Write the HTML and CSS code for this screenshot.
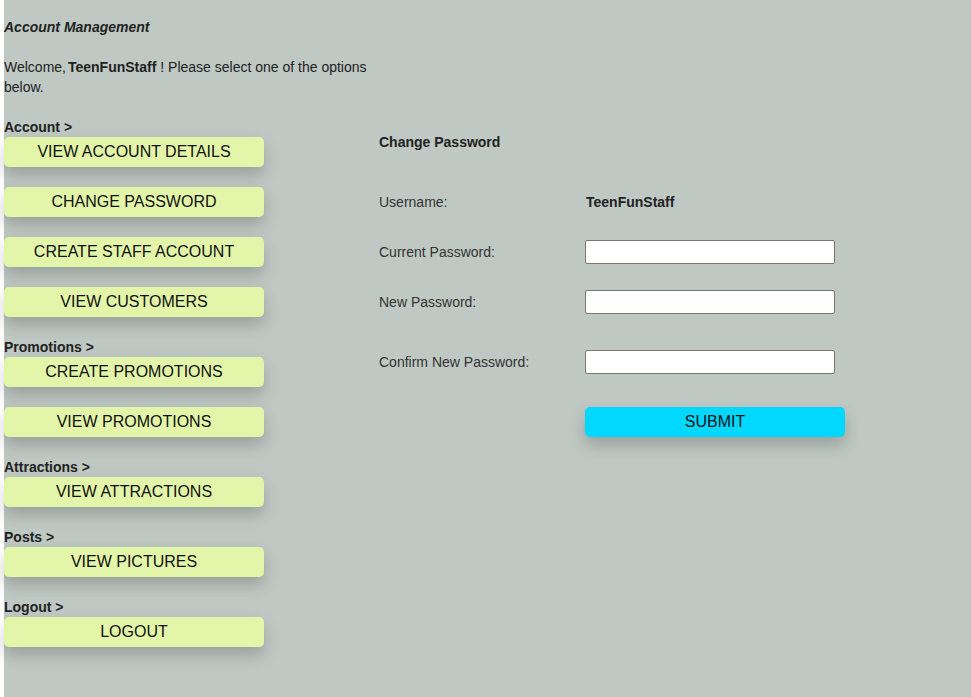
FILE: index.html
```html
<!DOCTYPE html>
<html lang="en">
<head>
<meta charset="utf-8">
<title>Account Management</title>
<link rel="stylesheet" href="styles.css">
</head>
<body>
<div class="page">
  <div class="menu">
    <p class="title">Account Management</p>
    <p class="welcome"><span>Welcome,</span><b class="name">TeenFunStaff</b><span> ! Please select one of the options below.</span></p>

    <div class="group-label">Account &gt;</div>
    <button class="nav-btn">VIEW ACCOUNT DETAILS</button>
    <button class="nav-btn">CHANGE PASSWORD</button>
    <button class="nav-btn">CREATE STAFF ACCOUNT</button>
    <button class="nav-btn">VIEW CUSTOMERS</button>

    <div class="group-label">Promotions &gt;</div>
    <button class="nav-btn">CREATE PROMOTIONS</button>
    <button class="nav-btn">VIEW PROMOTIONS</button>

    <div class="group-label">Attractions &gt;</div>
    <button class="nav-btn">VIEW ATTRACTIONS</button>

    <div class="group-label">Posts &gt;</div>
    <button class="nav-btn">VIEW PICTURES</button>

    <div class="group-label">Logout &gt;</div>
    <button class="nav-btn">LOGOUT</button>
  </div>

  <form class="panel">
    <div class="panel-title">Change Password</div>
    <div class="row row-user">
      <span class="label">Username:</span>
      <span class="value">TeenFunStaff</span>
    </div>
    <div class="row row-current">
      <label class="label">Current Password:</label>
      <input class="field" type="password">
    </div>
    <div class="row row-new">
      <label class="label">New Password:</label>
      <input class="field" type="password">
    </div>
    <div class="row row-confirm">
      <label class="label">Confirm New Password:</label>
      <input class="field" type="password">
    </div>
    <div class="row row-submit">
      <span class="label"></span>
      <button type="button" class="submit-btn">SUBMIT</button>
    </div>
  </form>
</div>
</body>
</html>
```

FILE: styles.css
```css
html, body {
  margin: 0;
  padding: 0;
  background: #ffffff;
}

body {
  font-family: "Liberation Sans", Arial, sans-serif;
  font-size: 14px;
  line-height: 20px;
  color: #222222;
}

.page {
  margin-left: 4px;
  min-height: 697px;
  background: #bfc8c3;
  display: flex;
  align-items: flex-start;
}

.menu {
  width: 375px;
  flex: none;
  display: flex;
  flex-direction: column;
  align-items: flex-start;
  padding-bottom: 30px;
}

.title {
  margin: 17px 0 20px;
  font-weight: bold;
  font-style: italic;
}

.welcome {
  margin: 0 0 20px;
  width: 370px;
}

.welcome .name {
  margin-left: 2px;
}

.group-label {
  font-weight: bold;
  height: 20px;
  line-height: 20px;
}

.nav-btn {
  width: 260px;
  height: 30px;
  margin: 0 0 20px;
  padding: 0;
  border: none;
  border-radius: 5px;
  background: #e3f5a8;
  color: #111111;
  font-family: "Liberation Sans", Arial, sans-serif;
  font-size: 16px;
  line-height: 30px;
  text-align: center;
  box-shadow: 0 8px 16px 0 rgba(0, 0, 0, 0.2);
  cursor: pointer;
}

.panel {
  display: flex;
  flex-direction: column;
  padding-top: 132px;
  margin: 0;
}

.panel-title {
  font-weight: bold;
  color: #222222;
  height: 20px;
}

.row {
  display: flex;
  align-items: center;
}

.label {
  width: 206px;
  flex: none;
  color: #333333;
}

.value {
  font-weight: bold;
  color: #222222;
  padding-left: 1px;
}

.row-user {
  margin-top: 40px;
  height: 20px;
}

.row-current {
  margin-top: 28px;
}

.row-new {
  margin-top: 26px;
}

.row-confirm {
  margin-top: 36px;
}

.row-submit {
  margin-top: 33px;
}

.field {
  box-sizing: border-box;
  width: 250px;
  height: 24px;
  margin: 0;
  padding: 1px 2px;
  border: 1px solid #767676;
  border-radius: 2px;
  background: #ffffff;
  font-family: "Liberation Sans", Arial, sans-serif;
  font-size: 13px;
}

.submit-btn {
  width: 260px;
  height: 30px;
  padding: 0;
  border: none;
  border-radius: 5px;
  background: #00d8ff;
  color: #111111;
  font-family: "Liberation Sans", Arial, sans-serif;
  font-size: 16px;
  line-height: 30px;
  box-shadow: 0 8px 16px 0 rgba(0, 0, 0, 0.2);
  cursor: pointer;
}
```
